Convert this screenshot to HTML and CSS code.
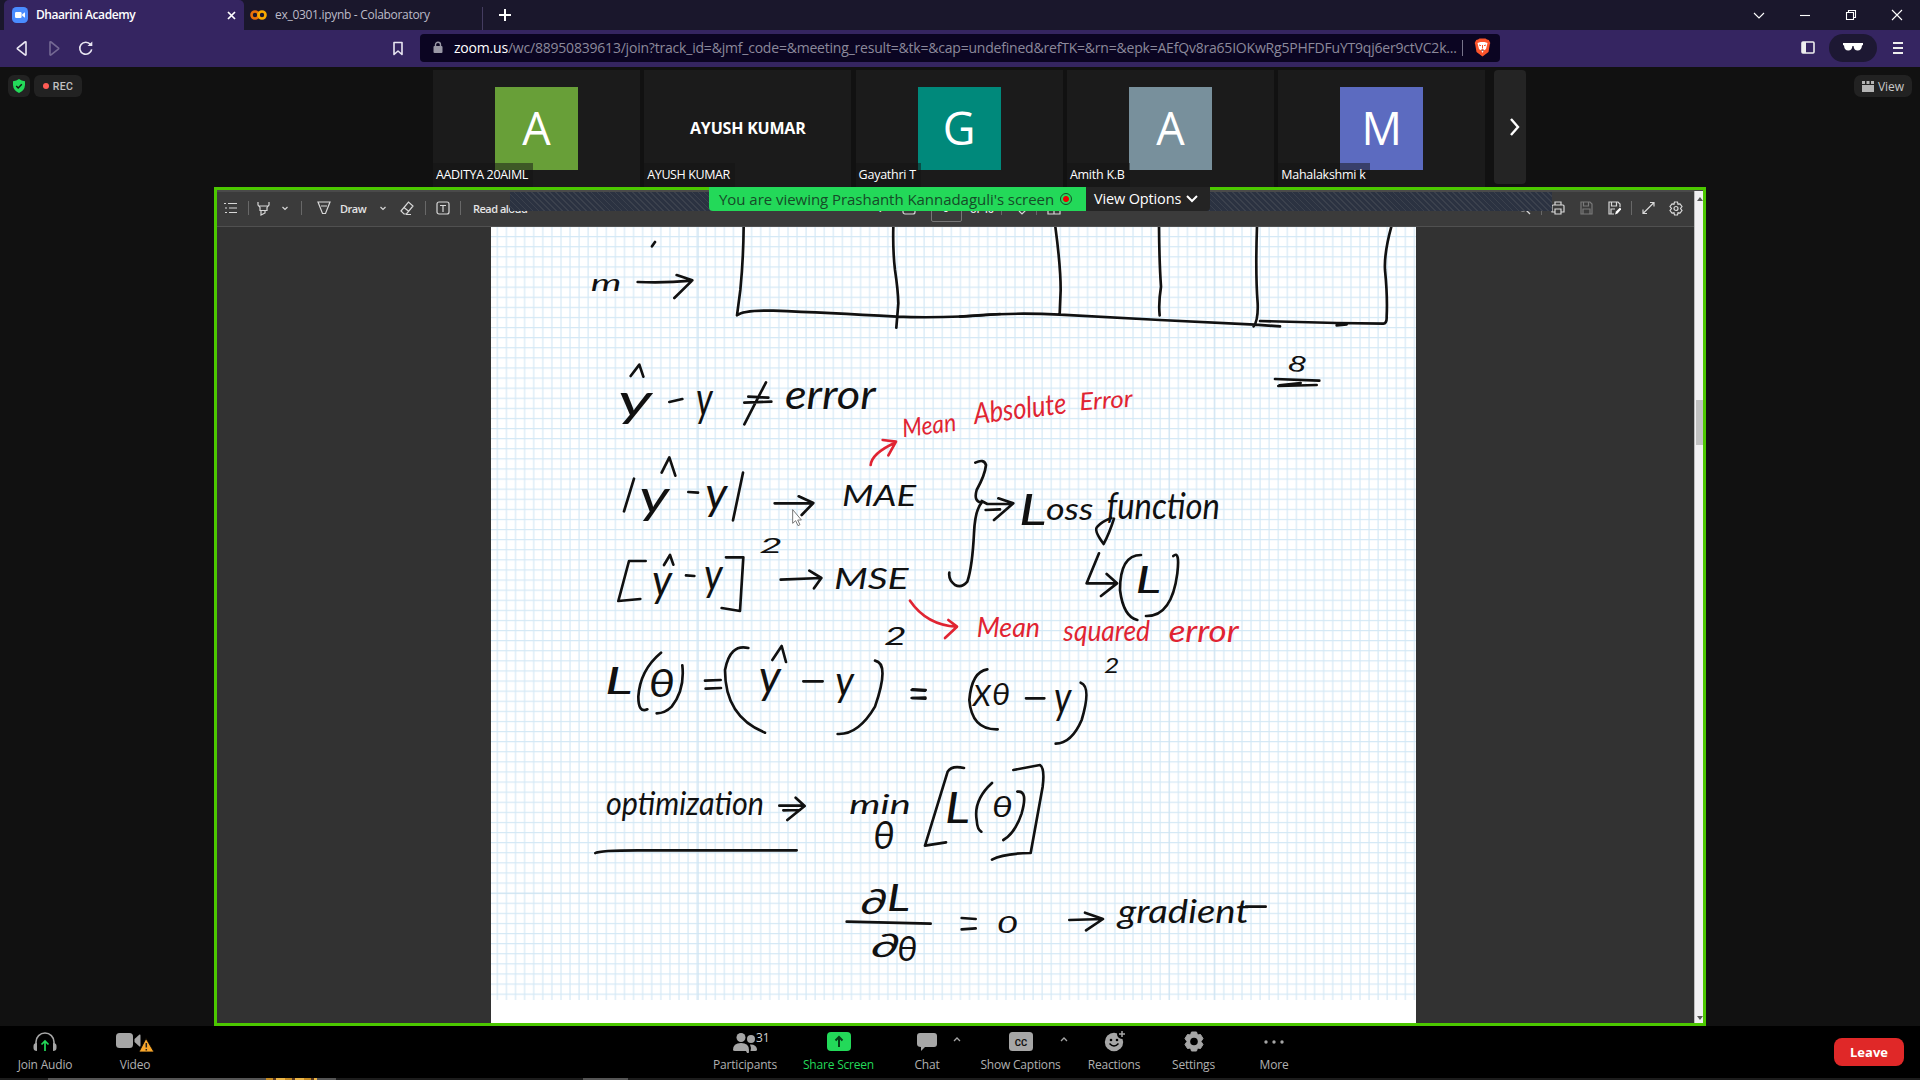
FILE: index.html
```html
<!DOCTYPE html>
<html lang="en">
<head>
<meta charset="utf-8">
<title>Dhaarini Academy</title>
<link rel="stylesheet" href="styles.css">
</head>
<body>
<div class="window">
  <header class="tabs">
    <div class="tab active">
      <svg width="16" height="16" viewBox="0 0 16 16"><rect width="16" height="16" rx="4.5" fill="#4a8cff"/><rect x="3" y="5" width="6.6" height="6" rx="1.2" fill="#fff"/><path d="M10.2 7.2 13 5.3v5.4l-2.8-1.9z" fill="#fff"/></svg>
      <span class="tab-title t1">Dhaarini Academy</span>
      <svg class="close" width="9" height="9" viewBox="0 0 9 9"><path d="M1 1l7 7M8 1 1 8" stroke="#fff" stroke-width="1.7"/></svg>
    </div>
    <div class="tab idle">
      <svg width="17" height="12" viewBox="0 0 17 12"><circle cx="5" cy="6" r="3.5" fill="none" stroke="#e8710a" stroke-width="2.6"/><circle cx="12" cy="6" r="3.5" fill="none" stroke="#f9ab00" stroke-width="2.6"/></svg>
      <span class="tab-title t2">ex_0301.ipynb - Colaboratory</span>
    </div>
    <svg class="newtab" width="12" height="12" viewBox="0 0 12 12"><path d="M6 0v12M0 6h12" stroke="#fff" stroke-width="2"/></svg>
    <div class="wincontrols">
      <svg width="46" height="28" viewBox="0 0 46 28"><path d="m18 12 5 5 5-5" class="wc"/></svg>
      <svg width="46" height="28" viewBox="0 0 46 28"><path d="M18 14.5h10" class="wc"/></svg>
      <svg width="46" height="28" viewBox="0 0 46 28"><path d="M18.5 11.500h7v7h-7zM20.500 11v-1.500h7v7h-1.500" class="wc"/></svg>
      <svg width="46" height="28" viewBox="0 0 46 28"><path d="m18 9 10 10M28 9 18 19" class="wc"/></svg>
    </div>
  </header>
  <nav class="nav">
    <svg width="32" height="32" viewBox="0 0 32 32"><path d="M20 10.500v12q0 1-1 .4l-7.300-5.700q-.8-.7 0-1.400L19 10q1-.6 1 .5z" class="ln"/></svg>
    <svg width="32" height="32" viewBox="0 0 32 32" opacity=".35"><path d="M12 10.500v12q0 1 1 .4l7.300-5.700q.8-.7 0-1.400L13 10q-1-.6-1 .5z" class="ln"/></svg>
    <svg width="32" height="32" viewBox="0 0 32 32"><path d="M20.500 12.500a6 6 0 1 0 1.200 4.800" class="ln"/><path d="M17.500 14h4.800V9.500z" fill="#e9e6f2"/></svg>
    <svg class="bm" width="32" height="32" viewBox="0 0 32 32"><path d="M12 10.500h8v12l-4-3.500-4 3.500z" class="ln"/></svg>
    <div class="url">
      <svg width="10" height="13" viewBox="0 0 10 13"><path d="M2.500 6V3.700a2.500 2.500 0 0 1 5 0V6" fill="none" stroke="#9a98a6" stroke-width="1.400"/><rect x=".5" y="5" width="9" height="7" rx="1" fill="#9a98a6"/></svg>
      <span class="addr"><b>zoom.us</b>/wc/88950839613/join?track_id=&amp;jmf_code=&amp;meeting_result=&amp;tk=&amp;cap=undefined&amp;refTK=&amp;rn=&amp;epk=AEfQv8ra65IOKwRg5PHFDFuYT9qj6er9ctVC2k...</span>
      <i class="urlsep"></i>
      <svg width="17" height="19" viewBox="0 0 17 19"><path d="M4 1.500 5.500.500h6L13 1.500l1.800.5 1.500 3-.5 1.500-1.300 7.500L8.500 18.500 2.500 14 1.200 6.500.700 5l1.500-3z" fill="#fb542b"/><path d="m3.500 5 3-1h4l3 1-1.500 6-2.500 2-1 2-1-2L5 11z" fill="#fff"/><path d="m5 7 2 .7M12 7l-2 .7M8.500 7v3.500M6.500 12.500l2-1 2 1" stroke="#fb542b"/></svg>
    </div>
    <svg class="side" width="14" height="13" viewBox="0 0 14 13"><rect x="1" y="1" width="12" height="11" rx="1" fill="none" stroke="#eee" stroke-width="1.600"/><path d="M1 1h4v11H1z" fill="#eee"/></svg>
    <div class="glasses"><svg width="20" height="9" viewBox="0 0 20 9"><path d="M0 0h20v2l-1 .5q-.5 5-4.300 5T10.600 3H9.400q-.4 4.500-4.200 4.500T1 2.500L0 2z" fill="#fff"/></svg></div>
    <svg width="10" height="12" viewBox="0 0 10 12"><path d="M0 1h10M0 6h10M0 11h10" stroke="#eee" stroke-width="1.800"/></svg>
  </nav>

  <main class="meeting">
    <div class="status">
      <span class="chip shield"><svg width="14" height="14" viewBox="0 0 14 14"><path d="M7 0q2.500 2 6 2.200V6q-.3 5.500-6 8-5.700-2.500-6-8V2.200Q4.500 2 7 0z" fill="#23d959"/><path d="m4.200 7 2 2 3.600-3.700" fill="none" stroke="#111" stroke-width="1.400"/></svg></span>
      <span class="chip rec"><i></i>REC</span>
    </div>
    <div class="strip">
      <div class="thumb"><div class="avatar green">A</div><span class="name n1">AADITYA 20AIML</span></div>
      <div class="thumb"><strong>AYUSH KUMAR</strong><span class="name n2">AYUSH KUMAR</span></div>
      <div class="thumb"><div class="avatar teal">G</div><span class="name n3">Gayathri T</span></div>
      <div class="thumb"><div class="avatar slate">A</div><span class="name n4">Amith K.B</span></div>
      <div class="thumb"><div class="avatar indigo">M</div><span class="name n5">Mahalakshmi k</span></div>
      <div class="next"><svg width="12" height="18" viewBox="0 0 12 18"><path d="m3 1 7 8-7 8" fill="none" stroke="#fff" stroke-width="2.400"/></svg></div>
    </div>
    <div class="viewbtn"><svg width="12" height="11" viewBox="0 0 12 11"><path d="M0 0h3v3H0zM4.500 0h3v3h-3zM9 0h3v3H9zM0 4h12v7H0z" fill="#b5b5b5"/></svg>View</div>

    <section class="share">
      <div class="pdfbar">
        <span class="c w27"><svg width="14" height="12" viewBox="0 0 14 12"><path d="M0 1.500h2M4 1.500h9M1 6h2M5 6h8M1 10.500h2M5 10.500h8" class="pi"/></svg></span>
        <span class="c w8"><i class="ps"></i></span>
        <span class="c w23"><svg width="13" height="15" viewBox="0 0 13 15"><path d="M1 1v3l2 2.500v3h7v-3L12 4V1M2 5h9M4 10v4l4-2v-2" class="pi"/></svg></span>
        <span class="c w20"><svg width="6" height="5" viewBox="0 0 6 5"><path d="m.5 1 2.500 2.500L5.500 1" class="pi"/></svg></span>
        <span class="c w13"><i class="ps"></i></span>
        <span class="c w32"><svg width="14" height="14" viewBox="0 0 14 14"><path d="M1 1h12L8.500 12.500h-3zM4 5h6" class="pi"/></svg></span>
        <span class="pt draw">Draw</span>
        <span class="c w25"><svg width="6" height="5" viewBox="0 0 6 5"><path d="m.5 1 2.500 2.500L5.500 1" class="pi"/></svg></span>
        <span class="c w24"><svg width="14" height="15" viewBox="0 0 14 15"><path d="m1 10 7.500-9 4.500 4-6.500 8H4zM4 6.500l5 4M6 13.500h5" class="pi"/></svg></span>
        <span class="c w13"><i class="ps"></i></span>
        <span class="c w21"><svg width="14" height="14" viewBox="0 0 14 14"><rect x="1" y="1" width="12" height="12" rx="2" class="pi"/><path d="M4 4.500h6M7 4.500V11" class="pi"/></svg></span>
        <span class="c w14"><i class="ps"></i></span>
        <span class="pt read">Read aloud</span>
        <div class="pages">
          <span class="pt plus">+</span>
          <svg width="14" height="14" viewBox="0 0 14 14"><rect x="1" y="1" width="12" height="12" rx="2" class="pi"/></svg>
          <span class="pagebox">9</span><span class="pt of">of 40</span>
          <i class="ps"></i>
          <svg width="12" height="14" viewBox="0 0 12 14"><path d="M10 1v8l-4 4-3-3" class="pi"/></svg>
          <i class="ps"></i>
          <svg width="14" height="14" viewBox="0 0 14 14"><path d="M1 1h12v12H1zM7 1v12" class="pi"/></svg>
        </div>
        <div class="tools">
          <span class="c w20"><svg width="14" height="14" viewBox="0 0 14 14"><circle cx="6" cy="6" r="4" class="pi"/><path d="m9 9 4 4" class="pi"/></svg></span>
          <span class="c w14"><i class="ps"></i></span>
          <span class="c w20"><svg width="14" height="14" viewBox="0 0 14 14"><path d="M4 4V1h6v3M3.500 11H1V5q0-1 1-1h10q1 0 1 1v6h-2.500M4 8h6v5H4z" class="pi"/></svg></span>
          <span class="c w36 dim"><svg width="13" height="14" viewBox="0 0 13 14"><path d="M1 1h9l2 2v10H1zM3.500 1v4h5V1M3 13V8h7v5" class="pi"/></svg></span>
          <span class="c w20"><svg width="13" height="14" viewBox="0 0 13 14"><path d="M6 13H1V1h9l2 2v3M3.500 1v4h5V1M3 13V8h4" class="pi"/><path d="m7 13.500 1-3 4-4 1.500 1.500-4 4.500z" fill="#fff"/></svg></span>
          <span class="c w14"><i class="ps"></i></span>
          <span class="c w21"><svg width="13" height="14" viewBox="0 0 13 14"><path d="M8 1.500h4v4M12 1.500 1 12.500M1 8.500v4h4" class="pi"/></svg></span>
          <span class="c w34"><svg width="14" height="15" viewBox="0 0 14 15"><path d="m5.500 1-.5 2.200L3 2.800 1 5.500 2.500 7.500 1 9.500l2 2.700 2-.4.500 2.200h3l.5-2.200 2 .4 2-2.700-1.500-2L13 5.500l-2-2.700-2 .4L8.500 1z" class="pi"/><circle cx="7" cy="7.500" r="2" class="pi"/></svg></span>
        </div>
        <div class="hatch"></div>
      </div>
      <div class="docrow">
        <svg class="paper" viewBox="491 227 925 796">
          <defs><pattern id="squares" x="1164.700" y="807.200" width="9.080" height="10.100" patternUnits="userSpaceOnUse"><path d="M4.600 0v10.100M0 5.100h9.080" stroke="#d3e8f5" stroke-width="1.100" fill="none"/></pattern></defs>
          <rect x="491" y="227" width="925" height="796" fill="#fff"/>
          <rect x="491" y="227" width="925" height="773" fill="url(#squares)"/>
          <path d="M698.300 227v773M1169.300 227v773M1214.300 227v773M491 893.400h925" stroke="#cde2f1" stroke-width=".8"/>

          <g transform="translate(560 220) scale(.33333)" class="ink">
            <path d="M285 66 276 79M233 186Q310 190 396 182M350 165 397 181 343 234M551 20Q550 120 541 210L531 286Q550 270 640 272 800 278 1010 290 1150 296 1320 282M1000 20Q998 90 1005 150 1014 210 1015 250L1009 323"/>
            <path d="M212 468 238 434 250 470M328 546 367 537M553 548 634 545M565 530 625 533M618 487 553 613"/>
            <text x="92" y="212" font-size="70" textLength="92" lengthAdjust="spacingAndGlyphs">m</text>
            <text x="174" y="588" font-size="132" textLength="102" lengthAdjust="spacingAndGlyphs">y</text>
            <text x="408" y="588" font-size="148" textLength="50" lengthAdjust="spacingAndGlyphs">y</text>
            <text x="675" y="566" font-size="120" textLength="272" lengthAdjust="spacingAndGlyphs">error</text>
            <g class="red"><path d="M932 735Q935 700 1005 668M968 660 1008 665 985 706"/><text transform="translate(1030 652) rotate(-7)" font-size="76" textLength="162" lengthAdjust="spacingAndGlyphs">Mean</text></g>
          </g>
          <g transform="translate(960 220) scale(.33333)" class="ink">
            <path d="M0 290Q150 276 300 284L600 300 885 314 960 319M286 20Q302 140 302 210L299 283M597 20Q598 130 603 200 595 250 599 286M891 20Q886 160 893 250 895 300 881 319M900 303 1130 309 1270 311Q1281 310 1280 290 1283 230 1275 150 1272 100 1294 20M1130 316 1160 313"/>
            <path d="M945 477 1078 482M955 498 1070 495M958 496 1022 489"/>
            <text transform="translate(980 451) rotate(8)" font-size="66" textLength="58" lengthAdjust="spacingAndGlyphs">8</text>
            <g class="red"><text transform="translate(44 613) rotate(-7)" font-size="88" textLength="280" lengthAdjust="spacingAndGlyphs">Absolute</text><text transform="translate(360 571) rotate(-4)" font-size="72" textLength="160" lengthAdjust="spacingAndGlyphs">Error</text></g>
          </g>
          <g transform="translate(560 450) scale(.33333)" class="ink">
            <path d="M305 68 328 22 346 77M222 86 192 184M385 126 414 128M549 68 519 211M644 160H757M716 139 760 159 725 195"/>
            <path d="M1246 38Q1272 25 1278 45 1275 75 1250 120 1240 155 1265 158 1245 180 1242 250 1237 350 1222 395 1205 415 1185 405 1165 390 1168 368"/>
            <path d="M257 333H207L175 453 241 447M312 345 330 315 340 344M378 376 403 378M498 322H550L540 483 485 474M662 389 783 384M748 362 784 384 762 415"/>
            <path d="M637 630 665 588 678 636M303 608Q240 660 235 740 235 790 262 778M367 646Q375 720 335 770 315 790 290 790M435 692 482 690M437 716 483 714M565 594Q510 580 495 660 495 800 615 848M730 694H788M945 632Q990 640 945 770 895 855 833 852M1058 718 1097 720M1055 744 1096 746"/>
            <text x="238" y="190" font-size="142" textLength="90" lengthAdjust="spacingAndGlyphs">y</text>
            <text x="436" y="176" font-size="134" textLength="66" lengthAdjust="spacingAndGlyphs">y</text>
            <text x="846" y="168" font-size="86" textLength="222" lengthAdjust="spacingAndGlyphs">MAE</text>
            <text x="276" y="439" font-size="134" textLength="60" lengthAdjust="spacingAndGlyphs">y</text>
            <text x="432" y="421" font-size="134" textLength="56" lengthAdjust="spacingAndGlyphs">y</text>
            <text x="598" y="310" font-size="62" textLength="70" lengthAdjust="spacingAndGlyphs">2</text>
            <text x="822" y="416" font-size="86" textLength="224" lengthAdjust="spacingAndGlyphs">MSE</text>
            <text x="972" y="585" font-size="78" textLength="68" lengthAdjust="spacingAndGlyphs">2</text>
            <text x="134" y="732" font-size="112" textLength="84" lengthAdjust="spacingAndGlyphs">L</text>
            <text x="266" y="740" font-size="114" textLength="78" lengthAdjust="spacingAndGlyphs">θ</text>
            <text x="596" y="730" font-size="140" textLength="66" lengthAdjust="spacingAndGlyphs">y</text>
            <text x="826" y="738" font-size="130" textLength="56" lengthAdjust="spacingAndGlyphs">y</text>
            <path class="redline" d="M1050 452Q1100 525 1190 530M1165 510 1191 530 1155 564"/>
            <path d="M698 180v40l9-8 7 15 6-3-7-14h10z" class="cursor"/>
          </g>
          <g transform="translate(900 430) scale(.33333)" class="ink">
            <path d="M245 213 262 222H335M257 240 300 238M295 205 340 220 282 270M597 370 560 460H650M620 432 651 460 603 498M723 375Q660 375 660 480 670 560 712 570M820 378Q840 360 832 430 815 560 738 558"/>
            <path d="M35 780 75 782M38 804 76 803M262 718Q215 725 208 810 215 900 293 898M378 805H433M542 758Q575 770 545 870 515 940 467 941"/>
            <text x="356" y="284" font-size="128" textLength="84" lengthAdjust="spacingAndGlyphs">L</text>
            <text x="438" y="271" font-size="92" textLength="142" lengthAdjust="spacingAndGlyphs">oss</text>
            <text x="620" y="266" font-size="108" textLength="340" lengthAdjust="spacingAndGlyphs">function</text>
            <path d="M642 266Q628 310 611 342 580 300 592 290 605 275 634 264"/>
            <text x="706" y="488" font-size="108" textLength="78" lengthAdjust="spacingAndGlyphs">L</text>
            <text x="612" y="730" font-size="64" textLength="46" lengthAdjust="spacingAndGlyphs">2</text>
            <text x="218" y="828" font-size="88" textLength="54" lengthAdjust="spacingAndGlyphs">X</text>
            <text x="276" y="826" font-size="92" textLength="54" lengthAdjust="spacingAndGlyphs">θ</text>
            <text x="462" y="850" font-size="136" textLength="52" lengthAdjust="spacingAndGlyphs">y</text>
            <g class="red"><text x="230" y="622" font-size="82" textLength="190" lengthAdjust="spacingAndGlyphs">Mean</text><text x="490" y="634" font-size="86" textLength="260" lengthAdjust="spacingAndGlyphs">squared</text><text x="806" y="636" font-size="92" textLength="210" lengthAdjust="spacingAndGlyphs">error</text></g>
          </g>
          <g transform="translate(580 740) scale(.33333)" class="ink">
            <path d="M46 339Q60 330 200 331L650 331M598 197H668M610 211 660 210M647 173 674 198 622 240M1152 84Q1115 75 1103 95L1035 317 1098 307M1236 129Q1180 180 1190 240 1192 270 1204 275M1312 155Q1345 150 1325 220 1305 280 1270 300M1300 90 1380 75Q1395 85 1388 140L1352 339Q1270 340 1236 359M800 545 1052 551M1145 534 1187 537M1145 568 1187 565"/>
            <text x="78" y="224" font-size="100" textLength="474" lengthAdjust="spacingAndGlyphs">optimization</text>
            <text x="808" y="222" font-size="82" textLength="184" lengthAdjust="spacingAndGlyphs">min</text>
            <text x="880" y="326" font-size="114" textLength="64" lengthAdjust="spacingAndGlyphs">θ</text>
            <text x="1094" y="250" font-size="126" textLength="76" lengthAdjust="spacingAndGlyphs">L</text>
            <text x="1236" y="232" font-size="84" textLength="62" lengthAdjust="spacingAndGlyphs">θ</text>
            <text x="842" y="521" font-size="104" textLength="78" lengthAdjust="spacingAndGlyphs">∂</text>
            <text x="920" y="512" font-size="112" textLength="70" lengthAdjust="spacingAndGlyphs">L</text>
            <text x="874" y="650" font-size="98" textLength="84" lengthAdjust="spacingAndGlyphs">∂</text>
            <text x="952" y="662" font-size="104" textLength="60" lengthAdjust="spacingAndGlyphs">θ</text>
            <text x="1250" y="580" font-size="72" textLength="64" lengthAdjust="spacingAndGlyphs">0</text>
          </g>
          <g transform="translate(1040 740) scale(.33333)" class="ink">
            <path d="M88 540 188 537M135 518 189 537 138 571M618 500H677"/>
            <text x="233" y="548" font-size="100" textLength="394" lengthAdjust="spacingAndGlyphs">gradient</text>
          </g>
        </svg>
      </div>
      <div class="scroll"><i class="up"></i><i class="grip"></i><i class="down"></i></div>
      <div class="banner"><span class="viewing">You are viewing Prashanth Kannadaguli's screen <i></i></span><span class="options">View Options<svg width="12" height="8" viewBox="0 0 12 8"><path d="m1 1 5 5 5-5" fill="none" stroke="#fff" stroke-width="2"/></svg></span></div>
    </section>
  </main>

  <footer class="controls">
    <div class="ctl a90"><svg width="26" height="22" viewBox="0 0 26 22"><path d="M4 13v-2a9 9 0 0 1 18 0v2" fill="none" stroke="#a6a6a6" stroke-width="1.600"/><path d="M1.500 15q0-3 3.500-3v8q-3.500 0-3.500-3zM24.500 15q0-3-3.500-3v8q3.500 0 3.500-3z" fill="#a6a6a6"/><path d="M13 20v-9M9.500 13.500 13 10l3.500 3.500" fill="none" stroke="#23d959" stroke-width="1.700"/></svg><span class="l1">Join Audio</span></div>
    <div class="ctl a90"><svg width="38" height="22" viewBox="0 0 38 22"><rect x="0" y="2" width="17" height="15" rx="3.500" fill="#a6a6a6"/><path d="m18.500 8 5-4.500q1-.5 1 1v10q0 1.500-1 1l-5-4.500z" fill="#a6a6a6"/><path d="M30 7.500 38 21H23z" fill="#f9a72b" stroke="#000" stroke-width=".8"/><path d="M30.300 12v4.500M30.300 18v1.500" stroke="#222" stroke-width="1.500"/></svg><span>Video</span></div>
    <div class="ctl first"><svg width="26" height="22" viewBox="0 0 26 22"><circle cx="9" cy="6.500" r="4.500" fill="#a6a6a6"/><path d="M1 19q0-7 8-7t8 7-3 1H3q-2 0-2-1z" fill="#a6a6a6"/><circle cx="19" cy="8" r="4" fill="#a6a6a6"/><path d="M18.500 20h5q2 0 1.500-2-1-4.500-6-4.500h-1q1.500 3 .5 6.500z" fill="#a6a6a6"/></svg><em class="count">31</em><span class="l3">Participants</span></div>
    <div class="ctl a93 bright"><svg width="24" height="22" viewBox="0 0 24 22"><rect y="1" width="24" height="19" rx="4" fill="#23d959"/><path d="M12 16V6M8.500 9.500 12 6l3.500 3.500" fill="none" stroke="#063d17" stroke-width="2"/></svg><span class="l4">Share Screen</span></div>
    <div class="ctl a84"><svg width="22" height="22" viewBox="0 0 22 22"><path d="M4 2h14q3 0 3 3v8q0 3-3 3H9l-4 4v-4q-4 0-4-3V5q0-3 3-3z" fill="#a6a6a6"/></svg><svg class="caret" width="8" height="6" viewBox="0 0 8 6"><path d="m1 5 3-3 3 3" fill="none" stroke="#a6a6a6" stroke-width="1.300"/></svg><span>Chat</span></div>
    <div class="ctl a103"><svg width="24" height="22" viewBox="0 0 24 22"><rect y="1" width="24" height="19" rx="3.500" fill="#a6a6a6"/><text x="12" y="14.500" class="cc">CC</text></svg><svg class="caret cap" width="8" height="6" viewBox="0 0 8 6"><path d="m1 5 3-3 3 3" fill="none" stroke="#a6a6a6" stroke-width="1.300"/></svg><span>Show Captions</span></div>
    <div class="ctl a84"><svg width="22" height="22" viewBox="0 0 22 22"><circle cx="11" cy="11" r="9.200" fill="#a6a6a6"/><circle cx="19" cy="3" r="5" fill="#000"/><path d="M19 0v6M16 3h6" stroke="#a6a6a6" stroke-width="1.500"/><circle cx="8" cy="9" r="1.300"/><circle cx="14" cy="9" r="1.300"/><path d="M6.500 12.500q4.500 5 9 0" fill="none" stroke="#000" stroke-width="1.500"/></svg><span>Reactions</span></div>
    <div class="ctl a75"><svg width="22" height="22" viewBox="0 0 22 22"><path d="m8.500 1-1 3-3-.5L2 7.500 4 10.500 2 13.500l2.500 4 3-.5 1 3h5l1-3 3 .5 2.500-4-2-3 2-3-2.500-4-3 .5-1-3z" fill="#a6a6a6" stroke="#a6a6a6" stroke-linejoin="round"/><circle cx="11" cy="10.500" r="3.800"/></svg><span>Settings</span></div>
    <div class="ctl a86"><svg width="22" height="22" viewBox="0 0 22 22"><g fill="#a6a6a6"><circle cx="3" cy="11" r="1.700"/><circle cx="11" cy="11" r="1.700"/><circle cx="19" cy="11" r="1.700"/></g></svg><span>More</span></div>
    <button class="leave">Leave</button>
  </footer>
  <div class="taskbar"><i class="field"></i><i class="art"></i><i class="field short"></i><i class="app"></i></div>
</div>
</body>
</html>
```
FILE: styles.css
```css
*{box-sizing:border-box}
body{margin:0;background:#111;font-family:"Open Sans","Noto Sans",sans-serif;color:#fff;overflow:hidden}
svg{display:block;flex:none}
.window{width:1920px;height:1080px;display:flex;flex-direction:column;overflow:hidden}
.tabs{height:30px;background:#1a172c;display:flex;align-items:center;padding-left:4px;flex:none}
.tab{height:30px;display:flex;align-items:center;font-size:12px;white-space:nowrap}
.active{width:240px;background:#352561;border-radius:5px 5px 0 0;padding:0 8px}
.tab-title{margin-left:8px;padding-bottom:1px}
.t1{font-weight:600;letter-spacing:-.43px}
.close{margin-left:auto}
.idle{width:239px;padding-left:6px;color:#bdbbc8;position:relative}
.idle::after{content:"";position:absolute;right:0;top:7px;height:23px;width:1px;background:#443c60}
.t2{letter-spacing:-.3px}
.newtab{margin-left:16px}
.wincontrols{margin-left:auto;display:flex}
.wc{fill:none;stroke:#fff;stroke-width:1.1}
.nav{height:37px;background:#352561;display:flex;align-items:center;padding:0 0 2px 6px;flex:none}
.ln{fill:none;stroke:#e9e6f2;stroke-width:1.6;stroke-linejoin:round}
.bm{margin-left:280px}
.url{margin-left:6px;width:1080px;height:28px;background:#0b0522;border-radius:4px;display:flex;align-items:center;padding-left:13px}
.addr{margin-left:11px;width:1002px;white-space:nowrap;font-size:14px;color:#8b899b;letter-spacing:-.205px}
.addr b{font-weight:400;color:#fff}
.urlsep{width:1px;height:16px;background:#77738a;margin:0 11px 0 6px}
.side{margin-left:301px}
.glasses{width:48px;height:28px;border-radius:14px;background:#1d1833;margin:0 16px 0 14px;display:flex;align-items:center;justify-content:center}
.meeting{height:959px;background:#111;position:relative;flex:none}
.status{position:absolute;left:8px;top:8px;display:flex;gap:4px}
.chip{height:22px;border-radius:6px;background:#222;display:flex;align-items:center;justify-content:center}
.shield{width:22px}
.rec{width:48px;gap:4px;font:500 10.5px Roboto,sans-serif;color:#c2c2c2;letter-spacing:.3px}
.rec i{width:6px;height:6px;border-radius:50%;background:#ff5c55}
.strip{height:120px;padding:3px 0 0 433px;display:flex;gap:4.3px}
.thumb{width:207px;height:117px;background:#1b1b1b;display:flex;align-items:center;justify-content:center;position:relative}
.avatar{width:83px;height:83px;display:flex;align-items:center;justify-content:center;font:500 45px/1 "Open Sans","Noto Sans",sans-serif;padding-bottom:3px}
.green{background:#689f38}.teal{background:#00897b}.slate{background:#78909c}.indigo{background:#5c6bc0}
.thumb strong{font-size:16px;letter-spacing:-.2px;padding-bottom:2px}
.name{position:absolute;left:0;bottom:0;height:24px;line-height:23px;padding:0 3px;font-size:12.5px;background:rgba(20,20,20,.5);white-space:nowrap;letter-spacing:-.25px}
.n1{width:100px;letter-spacing:-.35px}.n2{width:91px;letter-spacing:-.4px}.n3{width:65px}.n4{width:63px}.n5{width:92px}
.next{width:32px;height:114px;border-radius:4px;background:#242424;margin-left:5px;display:flex;align-items:center;justify-content:center;padding-left:7px}
.viewbtn{position:absolute;right:8px;top:8px;width:58px;height:22px;border-radius:7px;background:#222;display:flex;align-items:center;justify-content:center;gap:4px;font-size:12px;color:#c8c8c8}
.share{margin-left:214px;width:1492px;height:839px;border:3px solid #4cc800;background:#323232;position:relative}
.pdfbar{height:37px;background:#3b3b3b;border-top:2px solid #4a4a4a;border-bottom:1px solid #505050;display:flex;align-items:center;position:relative;overflow:hidden;padding-bottom:2px}
.c{display:flex;justify-content:center;align-items:center;flex:none}
.w8{width:8px}.w13{width:13px}.w14{width:14px}.w20{width:20px}.w21{width:21px}.w23{width:23px}.w24{width:24px}.w25{width:25px}.w27{width:27px}.w32{width:32px}.w34{width:34px}.w36{width:36px}
.ps{width:1px;height:14px;background:#686868;flex:none}
.pi{fill:none;stroke:#d8d8d8;stroke-width:1.2}
.dim{opacity:.4}
.pt{font-size:11px;color:#e4e4e4;font-weight:600;letter-spacing:-.5px;white-space:nowrap}
.draw{width:30px}.read{width:67px;padding-left:6px}
.pages{display:flex;align-items:center;margin-left:342px;height:34px}
.plus{width:26px;font-size:15px}
.pagebox{width:31px;height:28px;border:1px solid #777;border-radius:2px;text-align:center;font-size:11px;line-height:26px;margin:0 8px 0 15px}
.of{width:31px}
.pages .ps{margin-right:14px}
.pages svg+.ps{margin:0 10px 0 8px}
.tools{display:flex;align-items:center;margin-left:auto;margin-right:10px}
.hatch{position:absolute;left:293px;top:-2px;width:1042px;height:21px;background:repeating-linear-gradient(45deg,#2b3241 0 3px,#3b414d 3px 4.2px)}
.docrow{height:796px;display:flex;justify-content:flex-start;padding-left:274px;background:#323232}
.paper{width:925px;height:796px}
.ink path{fill:none;stroke:#111;stroke-width:8;stroke-linecap:round;stroke-linejoin:round}
.ink text{font-family:Lato,"DejaVu Sans",sans-serif;font-style:italic;fill:#111}
.ink .red path,.ink .redline{stroke:#e02432}
.ink .red text{fill:#e02432}
.ink .cursor{fill:#fff;stroke:#777;stroke-width:3}
.scroll{position:absolute;right:0;top:1px;width:9px;height:832px;background:#f1f0f2;border-left:1px solid #bbb;display:flex;flex-direction:column}
.up,.down{border:3px solid transparent;width:0;height:0;margin-left:2px}
.up{border-top-width:0;border-bottom:4px solid #555;margin-top:6px}
.down{border-bottom-width:0;border-top:4px solid #555;margin:auto 0 3px 2px}
.grip{height:45px;background:#c1c1c1;margin-top:199px;width:7px;margin-left:1px}
.banner{position:absolute;left:492px;top:-3px;display:flex;height:24px;align-items:center;white-space:nowrap}
.viewing{width:377px;height:24px;background:#23d959;border-radius:0 0 0 4px;color:#164b28;font-size:15px;letter-spacing:-.04px;line-height:24px;padding-left:10px;display:flex;align-items:center}
.viewing i{width:12px;height:12px;border:1.5px solid #164b28;border-radius:50%;margin-left:6px;background:radial-gradient(#e00 0 2.5px,transparent 3.5px)}
.options{width:124px;height:24px;background:#242424;border-radius:0 0 4px 0;font-size:14.500px;line-height:23px;padding:0 0 1px 8px;display:flex;align-items:center;gap:5px;letter-spacing:-.15px}
.controls{height:52px;background:#000;display:flex;flex:none;align-items:flex-start}
.ctl{position:relative;height:52px;padding-top:5px;display:flex;flex-direction:column;align-items:center;font-size:12px;line-height:16px;color:#b0b0b0;white-space:nowrap}
.ctl span{margin-top:4px;letter-spacing:-.2px}
.a75{width:75px}.a84{width:84px}.a86{width:86px}.a90{width:90px}.a93{width:93px}.a103{width:103px}
.first{width:94px;margin-left:518px}
.bright{color:#23d959}
.count{position:absolute;left:58px;top:4px;font-style:normal;font-size:12px;line-height:16px;color:#d0d0d0}
.caret{position:absolute;left:68px;top:10px}
.cap{left:91px}
.cc{font:700 9.5px Roboto,sans-serif;text-anchor:middle;fill:#111}
.leave{margin:12px 16px 0 auto;width:70px;height:28px;border:0;border-radius:8px;background:#e02828;color:#fff;font:700 13px "Open Sans","Noto Sans",sans-serif;padding:0}
.taskbar{height:2px;background:#1c1c1c;display:flex;padding-left:48px;flex:none}
.field{width:218px;background:#555}
.art{width:51px;background:repeating-linear-gradient(90deg,#c58b24 0 7px,#5b3b22 7px 10px,#edb647 10px 19px)}
.short{width:19px}
.app{width:45px;background:#555;margin-left:247px}
```
